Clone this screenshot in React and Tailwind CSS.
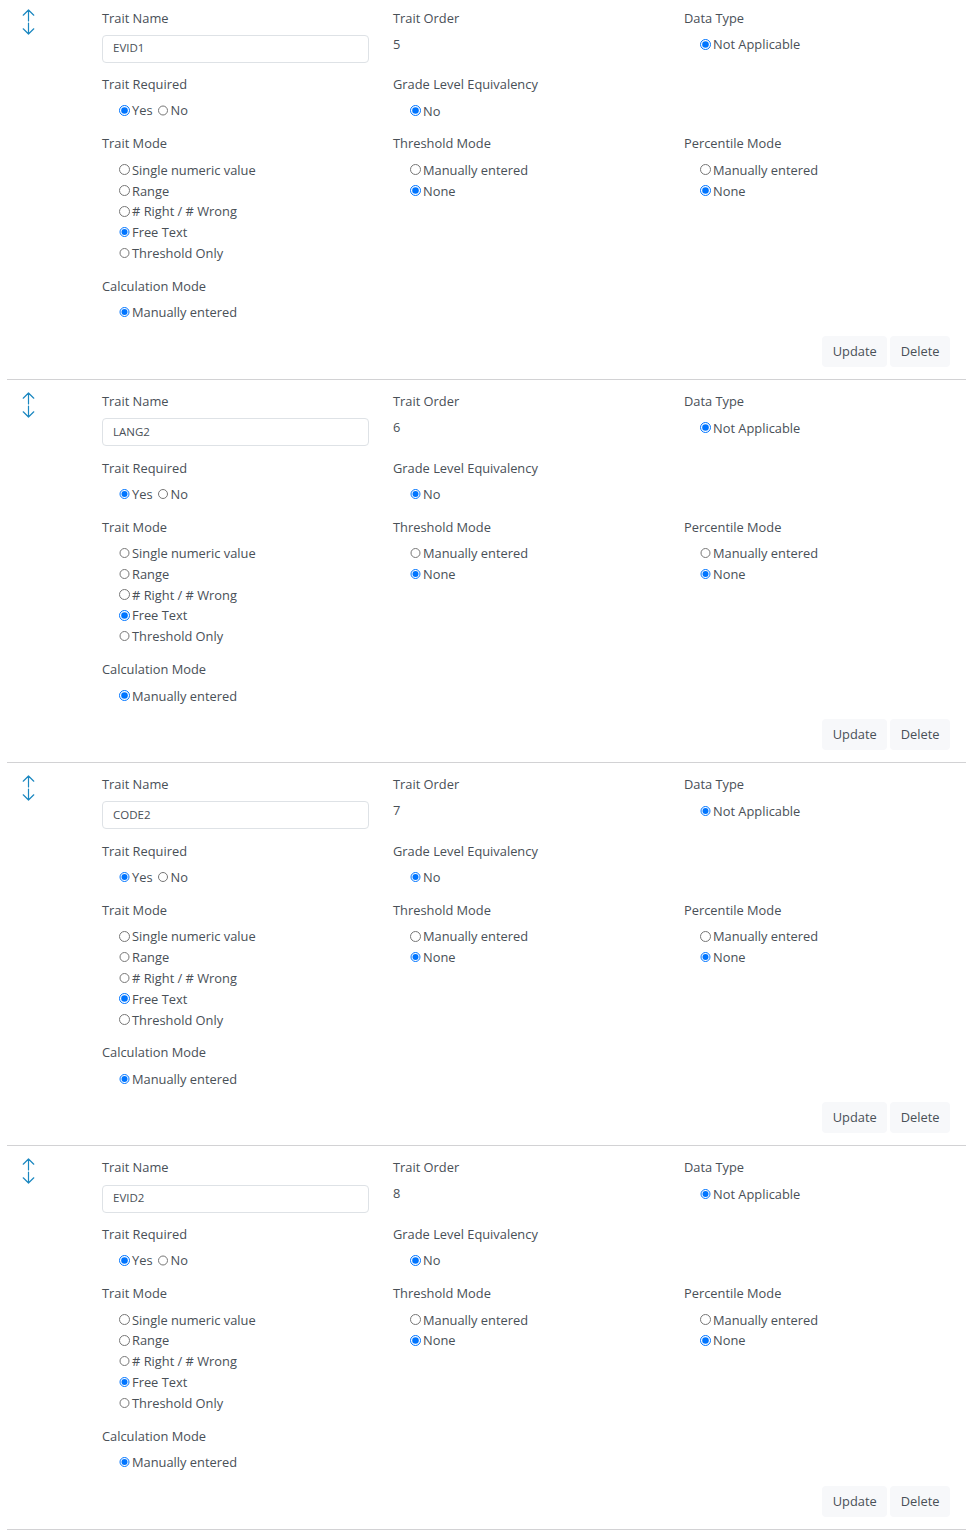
const Radio = ({ label, checked, className = "" }) => (
  <label className={`inline-flex items-center ${className}`}>
    <input type="radio" readOnly checked={!!checked} className="w-[10.5px] h-[10.5px] m-0 mr-[2.5px] -mt-[1px] accent-[#0075ff]" />
    <span>{label}</span>
  </label>
);

const Label = ({ children, mb = "mb-[5.4px]" }) => <div className={`h-[21px] leading-[21px] ${mb}`}>{children}</div>;

const Radios = ({ items, on, pad = "pl-[17px]" }) => (
  <div className={`${pad} flex flex-col`}>
    {items.map((t) => (
      <div key={t} className="h-[20.8px] leading-[20.8px] flex items-center">
        <Radio label={t} checked={t === on} />
      </div>
    ))}
  </div>
);

const Arrows = () => (
  <svg width="13" height="26" viewBox="0 0 13 26" fill="none" stroke="#1b87c0" strokeWidth="1.2" strokeLinecap="round" strokeLinejoin="round">
    <path d="M6.5 1V12M1.2 6.2 6.5 1l5.3 5.2M6.5 14V25M1.2 19.8 6.5 25l5.3-5.2" />
  </svg>
);

const Trait = ({ name, order }) => (
  <div className="border-b border-[#d2d2d4] h-[383.3px] flex flex-col">
    <div className="flex pt-[11.25px]">
      <div className="w-[95px] pl-[15px] pt-[1px] shrink-0"><Arrows /></div>
      <div className="flex-1 grid grid-cols-[291px_291px_1fr]">
        <div className="pb-[11.55px]">
          <Label mb="mb-[6.3px]">Trait Name</Label>
          <input readOnly value={name} className="block w-[267px] h-[28px] border border-[#dee2e6] rounded-[4px] px-[10px] pb-[2px] text-[11.5px] text-[#495057] bg-white outline-none" />
        </div>
        <div>
          <Label>Trait Order</Label>
          <div className="leading-[20px] -mt-[0.4px]">{order}</div>
        </div>
        <div>
          <Label mb="mb-[5.9px]">Data Type</Label>
          <Radios items={["Not Applicable"]} on="Not Applicable" pad="pl-[16px]" />
        </div>

        <div className="pb-[12px]">
          <Label mb="mb-[5.2px]">Trait Required</Label>
          <div className="pl-[17px] h-[20.8px] flex items-center">
            <Radio label="Yes" checked className="mr-[5px]" />
            <Radio label="No" />
          </div>
        </div>
        <div>
          <Label mb="mb-[5.2px]">Grade Level Equivalency</Label>
          <Radios items={["No"]} on="No" />
        </div>
        <div />

        <div className="pb-[11.85px]">
          <Label>Trait Mode</Label>
          <Radios items={["Single numeric value", "Range", "# Right / # Wrong", "Free Text", "Threshold Only"]} on="Free Text" />
        </div>
        <div>
          <Label>Threshold Mode</Label>
          <Radios items={["Manually entered", "None"]} on="None" />
        </div>
        <div>
          <Label>Percentile Mode</Label>
          <Radios items={["Manually entered", "None"]} on="None" pad="pl-[16px]" />
        </div>

        <div>
          <Label mb="mb-[5.7px]">Calculation Mode</Label>
          <Radios items={["Manually entered"]} on="Manually entered" />
        </div>
      </div>
    </div>
    <div className="flex justify-end gap-[3px] pr-[16px] mt-[12.7px]">
      <button className="h-[31px] px-[10.5px] rounded-[4px] bg-[#f7f8fa] text-[#495057]">Update</button>
      <button className="h-[31px] px-[10.5px] rounded-[4px] bg-[#f7f8fa] text-[#495057]">Delete</button>
    </div>
  </div>
);

export default function App() {
  return (
    <div className="bg-white h-[1539px] overflow-hidden">
      <div className="-mt-[3.7px] pl-[7px] pr-[8px] text-[12.85px] text-[#495057] font-['Open_Sans',sans-serif]">
        <Trait name="EVID1" order="5" />
        <Trait name="LANG2" order="6" />
        <Trait name="CODE2" order="7" />
        <Trait name="EVID2" order="8" />
      </div>
    </div>
  );
}
